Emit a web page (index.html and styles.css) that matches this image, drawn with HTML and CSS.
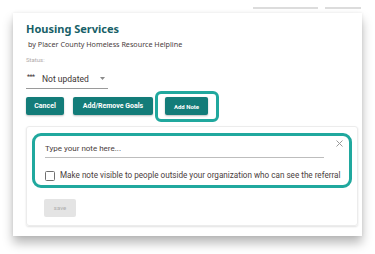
FILE: index.html
```html
<!DOCTYPE html>
<html lang="en">
<head>
<meta charset="utf-8">
<title>Housing Services</title>
<link rel="stylesheet" href="styles.css">
</head>
<body>
<div class="tabs"><span class="tab tab-a"></span><span class="tab tab-b"></span></div>
<div class="card">
  <h1 class="title">Housing Services</h1>
  <p class="subtitle">by Placer County Homeless Resource Helpline</p>
  <div class="status-label">Status:</div>
  <div class="select">
    <span class="dots">***</span>
    <span class="select-value">Not updated</span>
    <svg class="caret" width="5" height="3" viewBox="0 0 5 3"><path d="M0 0h5L2.5 3z" fill="#8a8a8a"/></svg>
  </div>
  <div class="actions">
    <button class="btn btn-cancel">Cancel</button>
    <button class="btn btn-goals">Add/Remove Goals</button>
    <div class="focus-ring ring-btn">
      <button class="btn btn-note">Add Note</button>
    </div>
  </div>
  <div class="note-card">
    <div class="focus-ring ring-note">
      <div class="note-top">
        <div class="note-input">Type your note here...</div>
        <svg class="close" width="7" height="7" viewBox="0 0 7 7"><path d="M0.5 0.5l6 6M6.5 0.5l-6 6" stroke="#9a9a9a" stroke-width="1"/></svg>
      </div>
      <label class="check-row"><span class="checkbox"></span><span class="check-label">Make note visible to people outside your organization who can see the referral</span></label>
    </div>
    <button class="btn-save">save</button>
  </div>
</div>
</body>
</html>
```

FILE: styles.css
```css
* { box-sizing: border-box; }
html, body { margin: 0; padding: 0; background: #fff; }
body {
  width: 375px;
  height: 254px;
  overflow: hidden;
  padding-top: 7px;
  font-family: Roboto, "Liberation Sans", sans-serif;
  color: #4a4040;
}
.tabs {
  display: flex;
  justify-content: flex-end;
  gap: 7px;
  padding-right: 14px;
  height: 2px;
  margin-bottom: 4px;
}
.tab { display: block; height: 2px; background: #dcdcdc; }
.tab-a { width: 65px; }
.tab-b { width: 36px; }
.card {
  margin-left: 13px;
  width: 349px;
  height: 223px;
  background: #fff;
  padding: 8px 4px 0 13px;
  box-shadow: 0 7px 10px rgba(0,0,0,0.28), 0 0 3px rgba(0,0,0,0.08);
}
.title {
  margin: 0;
  font-family: "Noto Sans", "Open Sans", sans-serif;
  font-weight: 700;
  font-size: 11px;
  line-height: 16px;
  color: #185f68;
}
.subtitle {
  margin: 2.4px 0 0 2px;
  font-family: "Noto Sans", "Open Sans", sans-serif;
  font-size: 7.2px;
  line-height: 10px;
  color: #4a4040;
}
.status-label {
  margin-top: 7px;
  font-size: 6px;
  line-height: 8px;
  color: #b0aaaa;
}
.select {
  margin-top: 8.5px;
  width: 82px;
  display: flex;
  align-items: center;
  height: 16px;
  padding-bottom: 3px;
  border-bottom: 1px solid #9a9a9a;
  font-size: 8.5px;
  line-height: 12px;
  color: #3e3636;
}
.dots { margin-left: 1px; width: 15px; font-size: 7px; position: relative; top: -2px; letter-spacing: -0.5px; }
.caret { margin-left: 11px; }
.actions {
  margin-top: 2px;
  display: flex;
  align-items: center;
  height: 31px;
}
.btn {
  display: block;
  border: 0;
  border-radius: 2px;
  background: #137c79;
  color: #fff;
  font-family: Roboto, "Liberation Sans", sans-serif;
  font-weight: 700;
  font-size: 7px;
  height: 18px;
  padding: 0;
  box-shadow: 0 1px 2px rgba(0,0,0,0.25);
}
.btn-cancel { width: 38px; }
.btn-goals { width: 80px; margin-left: 9px; }
.btn-note { width: 43px; font-size: 6px; }
.focus-ring {
  border: 3px solid #20a89e;
}
.ring-btn {
  display: flex;
  align-items: center;
  margin-left: 2px;
  border-radius: 6px;
  padding: 0 8px 0 7px;
  height: 31px;
}
.note-card {
  margin-top: 4px;
  width: 332px;
  height: 100px;
  border: 1px solid #ececec;
  border-radius: 3px;
  box-shadow: 0 1px 2px rgba(0,0,0,0.12);
  padding: 6px 5px 0 5px;
}
.ring-note {
  border-radius: 9px;
  height: 55px;
  padding: 7.5px 6px 0 10px;
}
.note-top {
  display: flex;
  align-items: flex-start;
}
.note-input {
  width: 279px;
  font-size: 8px;
  line-height: 11px;
  padding-bottom: 2.5px;
  border-bottom: 1px solid #bdbdbd;
  color: #4a4040;
}
.close { margin-left: auto; margin-top: -3.5px; }
.check-row {
  margin-top: 12.5px;
  display: flex;
  align-items: center;
  height: 11px;
}
.checkbox {
  width: 10px;
  height: 10px;
  border: 1.5px solid #707070;
  border-radius: 1.5px;
  flex: none;
}
.check-label {
  margin-left: 5px;
  font-size: 8.15px;
  line-height: 11px;
  color: #4a4040;
  white-space: nowrap;
}
.btn-save {
  display: block;
  margin: 11px 0 0 12px;
  width: 32px;
  height: 18px;
  border: 0;
  border-radius: 2px;
  background: #e4e4e4;
  color: #adadad;
  font-family: Roboto, "Liberation Sans", sans-serif;
  font-size: 6px;
  padding: 0;
}
```
